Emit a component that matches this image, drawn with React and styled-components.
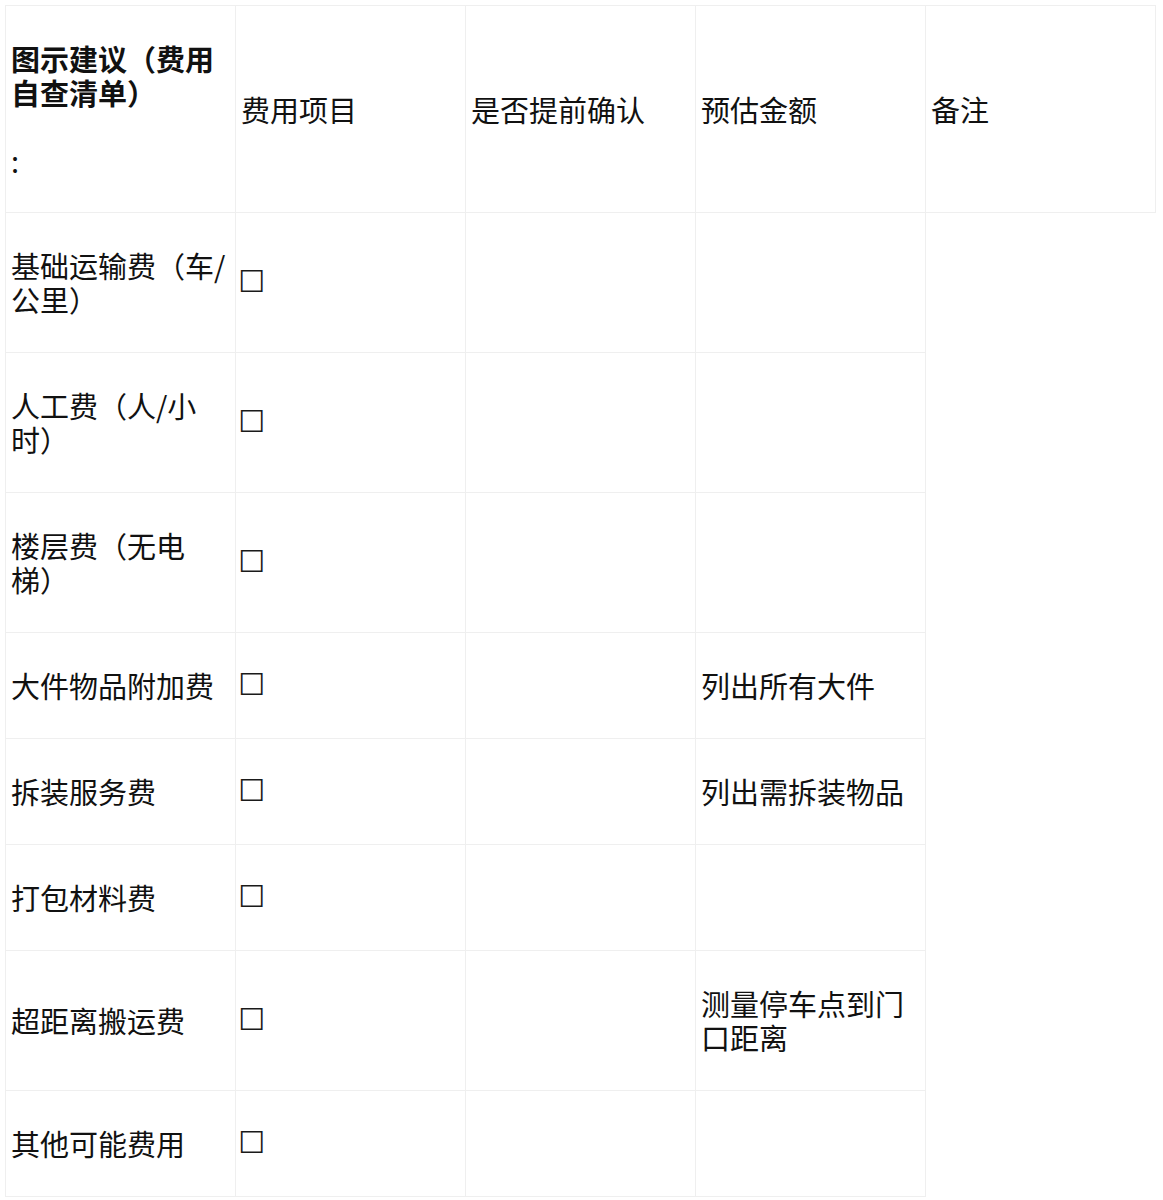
import styled, { createGlobalStyle } from 'styled-components';

const GlobalStyle = createGlobalStyle`
body {
  margin:0;
  background:#fff;
  font-family:"Noto Sans CJK SC", "Noto Sans", sans-serif;
  color:#111;
}
`

const Page = styled.div`
padding:5px;
`

const Table = styled.table`
border-collapse:collapse;
table-layout:fixed;
width:1151px;
`

const Cell = styled.td`
width:217px;
border:1px solid #efefef;
padding:35px 7px ${p => (p.$head ? '35px' : '36px')} 5px;
font-size:29px;
line-height:34px;
vertical-align:middle;
word-break:break-all;
`

const Gap = styled.span`
display:block;
height:34px;
`

const Box = styled.span`
display:inline-block;
margin-left:-3px;
font-family:"DejaVu Sans", sans-serif;
font-size:30px;
line-height:34px;
vertical-align:top;
color:#1a1a1a;
`

const rows = [
  ['基础运输费（车/公里）', ''],
  ['人工费（人/小时）', ''],
  ['楼层费（无电梯）', ''],
  ['大件物品附加费', '列出所有大件'],
  ['拆装服务费', '列出需拆装物品'],
  ['打包材料费', ''],
  ['超距离搬运费', '测量停车点到门口距离'],
  ['其他可能费用', ''],
]

const App = () => {
  return <Page>
    <GlobalStyle />
    <Table>
      <tbody>
        <tr>
          <Cell $head>
            <strong>图示建议（费用自查清单）</strong>
            <Gap />
            :
          </Cell>
          <Cell $head>费用项目</Cell>
          <Cell $head>是否提前确认</Cell>
          <Cell $head>预估金额</Cell>
          <Cell $head>备注</Cell>
        </tr>
        {rows.map(([item, note]) => (
          <tr key={item}>
            <Cell>{item}</Cell>
            <Cell><Box>☐</Box></Cell>
            <Cell></Cell>
            <Cell>{note}</Cell>
          </tr>
        ))}
      </tbody>
    </Table>
  </Page>
}

export default App;
